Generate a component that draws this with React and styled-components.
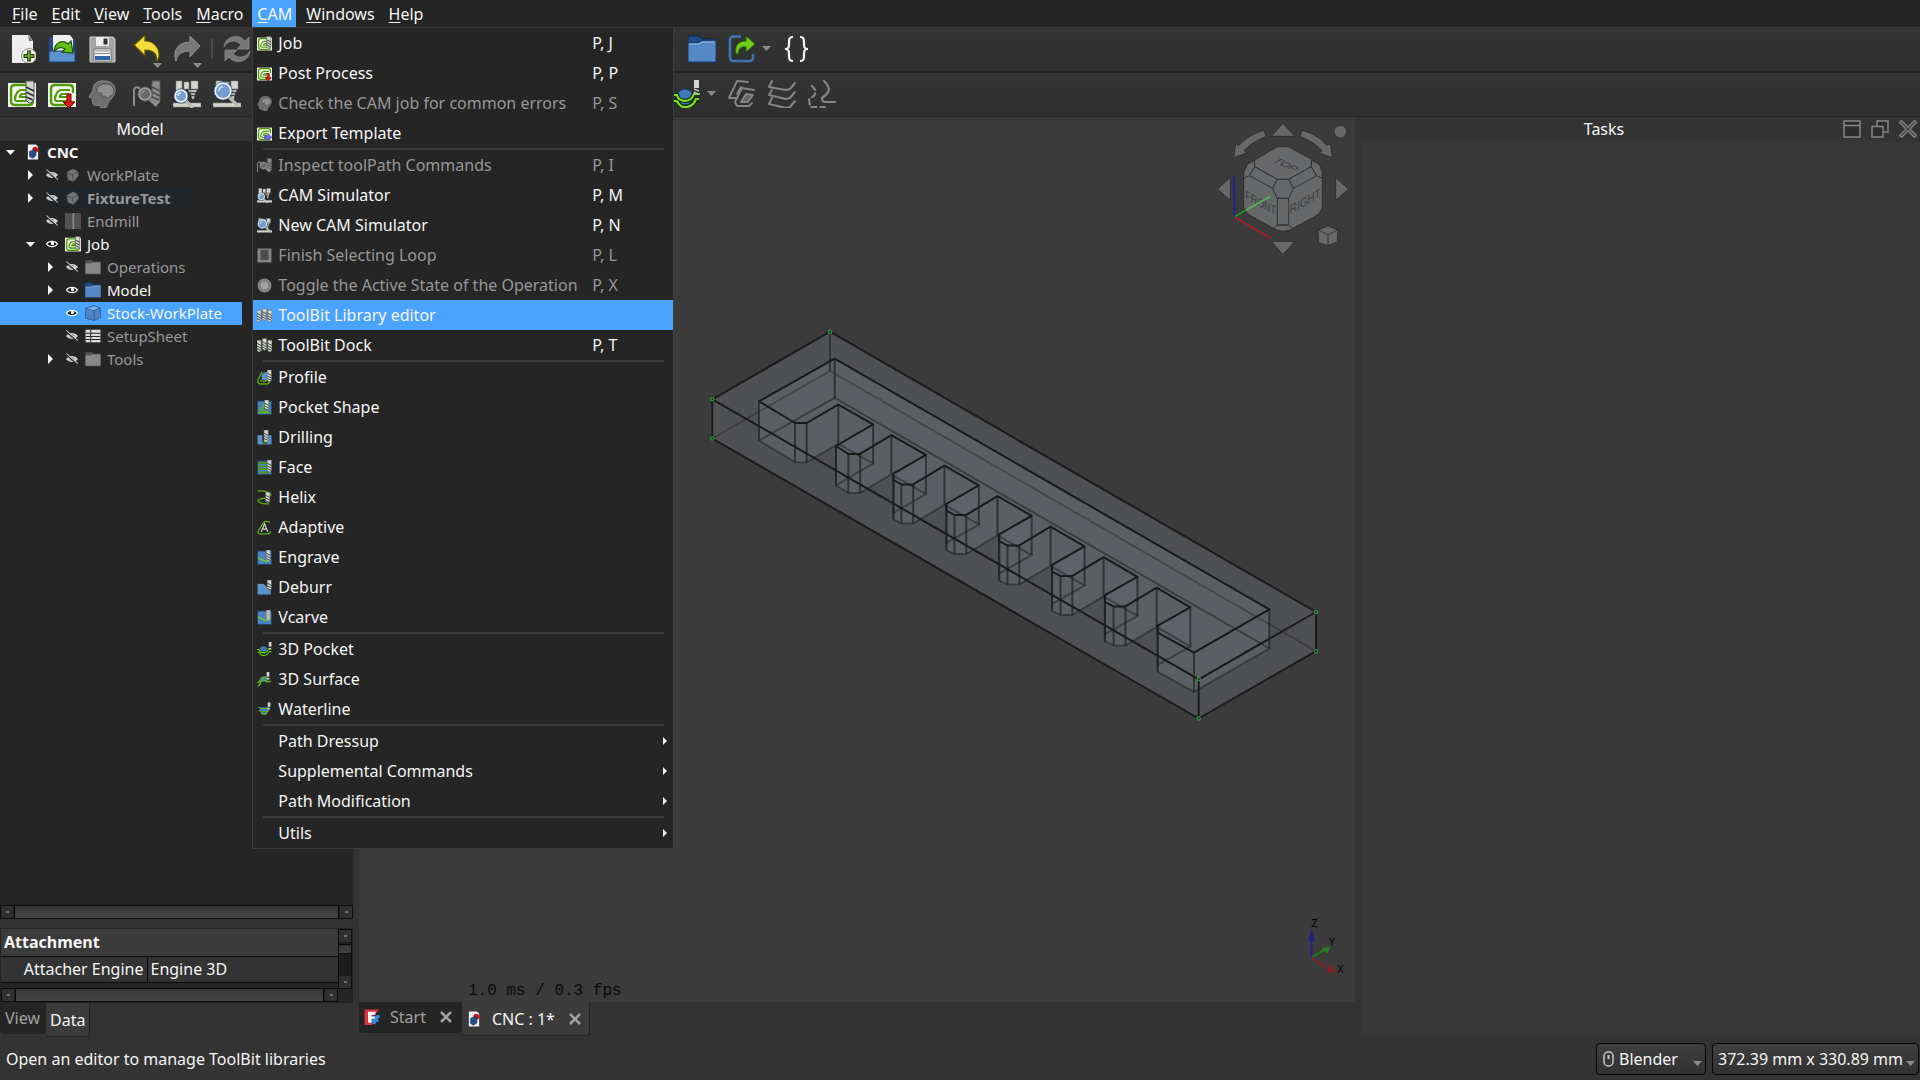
import { useState } from 'react';
import styled, { createGlobalStyle, css } from 'styled-components';

/* ---------- icons ---------- */

const Icon = ({ size = 28, children }) => (
	<svg width={size} height={size} viewBox="0 0 28 28" fill="none" aria-hidden="true">
		{children}
	</svg>
);

const Bit = ({ x = 18, y = 1, h = 20, dim }) => (
	<g>
		<path
			d={`M${x} ${y}h8v${h - 3}l-3 3h-2l-3-3z`}
			fill={dim ? '#8c8c8c' : '#d3d7cf'}
			stroke={dim ? '#5c5c5c' : '#555753'}
		/>
		<path
			d={`M${x} ${y + 6}l8 4M${x} ${y + 11}l8 4M${x} ${y + 16}l7 3`}
			stroke={dim ? '#4a4a4a' : '#2e3436'}
			strokeWidth="1.6"
		/>
	</g>
);

const Spiral = () => (
	<g>
		<path d="M0 3h28v24H0z" fill="#f4f8ee" />
		<path
			d="M25 13V9c0-3-1-4-4-4H7C4 5 3 6 3 9v12c0 3 1 4 4 4h14c3 0 4-1 4-4"
			stroke="#4e9a06"
			strokeWidth="2.4"
		/>
		<path d="M22 10h-9c-3 0-6 5-6 9 0 2 1 2 3 2h11M21 14h-6c-2 0-3 1-3 3h8" stroke="#4e9a06" strokeWidth="2.2" />
	</g>
);

const Lens = ({ x, y, r, dim }) => (
	<g>
		<path
			d={`M${x + r * 0.7} ${y + r * 0.7}L${x + r * 1.8} ${y + r * 1.8}`}
			stroke={dim ? '#8a8a8a' : '#babdb6'}
			strokeWidth="3.4"
			strokeLinecap="round"
		/>
		<circle cx={x} cy={y} r={r} fill={dim ? '#6a6a6a' : '#729fcf'} stroke={dim ? '#9a9a9a' : '#eeeeec'} strokeWidth="2" />
		<circle cx={x} cy={y} r={r + 1.2} stroke={dim ? '#555' : '#204a87'} strokeWidth="0.7" />
		<path d={`M${x - r / 2} ${y}q0-${r / 2} ${r / 2}-${r / 2}`} stroke={dim ? '#888' : '#d5e4f5'} strokeWidth="1.6" />
	</g>
);

const Machine = () => (
	<g>
		<path d="M3 1h6v12H3zM11 2h5v7h-5zM18 1h7v8h-7z" fill="#d3d7cf" stroke="#888a85" strokeWidth="0.6" />
		<path d="M15 10h9l-2 4h-4zM18 14h4l-1 5h-2z" fill="#babdb6" />
		<path d="M17 12l6 1M18 15l4 1" stroke="#2e3436" />
		<path d="M0 23h28v4H0z" fill="#d3d7cf" stroke="#888a85" strokeWidth="0.6" />
	</g>
);

const Brain = () => (
	<g>
		<path
			d="M17 1C9 0 5 4 5 10l-4 7 3 1 1 6c1 2 4 2 6 1l2 3 6-1c0-4 2-6 5-9 6-7 3-17-7-17z"
			fill="#6e6e6e"
			stroke="#8a8a8a"
		/>
		<path d="M9 9c0-5 15-9 17 1 0 4-2 6-4 6-1 3-4 2-5 0-3 1-4-1-3-3-3 1-6-1-5-4z" fill="#8f8f8f" stroke="#4c4c4c" />
	</g>
);

const BlueBlock = () => <path d="M1 2h26v25H1z" fill="#4a82c0" stroke="#1d3f70" strokeWidth="1.4" />;

const icons = {
	newDoc: (
		<>
			<path d="M4 0h17l4 6v22H4z" fill="#eeeeec" />
			<path d="M20 0l5 6h-4z" fill="#777" />
			<circle cx="21" cy="21" r="7.4" fill="#f5f5f3" stroke="#888" />
			<path d="M21 15.5v11M15.5 21h11" stroke="#22420a" strokeWidth="4" />
			<path d="M21 16.5v9M16.5 21h9" stroke="#5da30e" strokeWidth="2.2" />
		</>
	),
	open: (
		<>
			<path d="M1 2h7v24H1z" fill="#204a87" />
			<path d="M20 4h7v22h-7z" fill="#204a87" />
			<path d="M5 0h17l3 4v13H5z" fill="#eeeeec" />
			<path d="M1 16h26v11H1z" fill="#5b93d1" stroke="#1c3f73" />
			<path d="M6 17c0-9 8-13 14-8l3-3 2 12-11-1 3-3c-4-3-9-1-11 3z" fill="#5fbf14" stroke="#1f4d05" strokeWidth="1.2" />
		</>
	),
	save: (
		<>
			<path d="M2 2h23l2 2v23H2z" fill="#a4a6a2" stroke="#d0d2ce" />
			<path d="M8 2h13v9H8z" fill="#eeeeec" />
			<path d="M15.5 3.5h4v6h-4z" fill="#2e3436" />
			<path d="M6 14h17v12H6z" fill="#f5f5f3" stroke="#666" strokeWidth="0.8" />
			<path d="M7 16h15M7 18.5h15" stroke="#888" />
			<path d="M7 21h15v4H7z" fill="#3465a4" />
		</>
	),
	undo: (
		<path
			d="M1 10L12 0v6c9 0 15 7 14 16-1 3-2 4-3 4 2-6-2-11-11-11v6z"
			fill="#f4dc3a"
			stroke="#5f5200"
			strokeWidth="1.2"
		/>
	),
	redo: <path d="M27 11L17 1v6C7 7 1 13 2 22l1 4c1-6 5-10 14-10v6z" fill="#787878" stroke="#8e8e8e" />,
	refresh: (
		<>
			<path d="M1 12C2 1 16-2 22 6l4-4v12H14l4-4C13 4 5 5 1 12z" fill="#777" stroke="#8c8c8c" strokeWidth="0.8" />
			<path d="M27 16C26 27 12 30 6 22l-4 4V15h12l-4 4c5 5 13 4 17-3z" fill="#777" stroke="#8c8c8c" strokeWidth="0.8" />
		</>
	),
	folder: (
		<>
			<path d="M0 1h11l3 3h14v6H0z" fill="#204a87" stroke="#0d274d" />
			<path d="M0 8h10l3-2h15v21H0z" fill="#5588c7" stroke="#1b3c6c" />
			<path d="M1 9h10l3-2h13" stroke="#9dc0e8" />
		</>
	),
	folderGray: (
		<>
			<path d="M1 2h11l3 3h12v5H1z" fill="#565656" />
			<path d="M1 8h10l3-2h13v20H1z" fill="#888" stroke="#777" />
		</>
	),
	link: (
		<>
			<path d="M13 1.5H6c-3 0-4 1-4 4V22c0 3 1 4 4 4h15c3 0 4-1 4-4v-3" stroke="#3f74b5" strokeWidth="2.6" />
			<path d="M8 19C6 9 12 6 18 6V1l9 8-9 8v-5c-6-1-7 2-8 7z" fill="#6fcc1c" stroke="#2c6408" />
		</>
	),
	braces: (
		<path
			d="M10 2C6 2 6 4 6 8s0 6-4 6c4 0 4 2 4 6s0 6 4 6M17 2c4 0 4 2 4 6s0 6 4 6c-4 0-4 2-4 6s0 6-4 6"
			stroke="#f4f4f4"
			strokeWidth="2.2"
		/>
	),
	job: (
		<>
			<Spiral />
			<Bit x={18} y={1} h={22} />
		</>
	),
	post: (
		<>
			<Spiral />
			<path d="M19 14h4v8h4l-6 6-6-6h4z" fill="#e01b1b" stroke="#7c0000" />
		</>
	),
	exportTemplate: (
		<>
			<Spiral />
			<path d="M14 18h7v-3l7 6-7 6v-3h-7z" fill="#6a6af5" stroke="#3535b0" />
		</>
	),
	check: <Brain />,
	inspect: (
		<>
			<path d="M1 26V11c0-5 6-5 6 0" stroke="#8a8a8a" strokeWidth="2" />
			<Bit x={19} y={1} h={24} dim />
			<Lens x={12} y={14} r={6} dim />
		</>
	),
	simulator: (
		<>
			<Machine />
			<Lens x={8} y={16} r={6} />
		</>
	),
	newSimulator: (
		<>
			<Machine />
			<Lens x={10} y={11} r={8} />
		</>
	),
	loop: (
		<>
			<path d="M1 1h26v26H1z" fill="#858585" />
			<path d="M6 3h16v20H6z" fill="#4d4d4d" stroke="#a0a0a0" strokeDasharray="3 1.5" />
		</>
	),
	toggle: (
		<>
			<circle cx="14" cy="14" r="13" fill="#858585" />
			<circle cx="14" cy="14" r="8" fill="#a2a2a2" stroke="#666" strokeDasharray="3 2" strokeWidth="1.6" />
		</>
	),
	toolBits: (
		<>
			<Bit x={0} y={4} h={22} />
			<Bit x={10} y={1} h={22} />
			<Bit x={20} y={4} h={22} />
		</>
	),
	profile: (
		<>
			<path d="M9 18V10c1-6 10-7 13-4v13z" fill="#5b93d1" />
			<path d="M10 3L2 18c-2 7 3 9 8 8h9c4-1 5-5 3-8M6 19c5 4 10 2 14-1" stroke="#5fae14" strokeWidth="2.6" />
			<Bit x={19} y={0} h={22} />
		</>
	),
	pocket: (
		<>
			<BlueBlock />
			<path d="M2 25L15 5h8M7 24L17 8M12 24h13M3 25l20-5" stroke="#5fae14" strokeWidth="2.4" />
			<Bit x={14} y={0} h={20} />
		</>
	),
	drilling: (
		<>
			<path d="M1 10h9v13h9V10h8v17H1z" fill="#5b93d1" />
			<path d="M11 20h8v6h-8z" fill="#356a10" />
			<Bit x={13} y={0} h={23} />
		</>
	),
	face: (
		<>
			<BlueBlock />
			<path d="M2 6h18M25 12H4v5h20M24 23H3" stroke="#4e9a06" strokeWidth="3.2" />
			<Bit x={19} y={0} h={22} />
		</>
	),
	helix: (
		<>
			<path d="M1 2c12-1 24 2 25 7 0 7-20 5-24 10-1 5 10 7 20 7" stroke="#5fae14" strokeWidth="2.4" />
			<Bit x={16} y={4} h={20} />
		</>
	),
	adaptive: (
		<>
			<path d="M24 5c-2-3-9-3-12 0L2 21c-1 3 1 5 4 5h14c3 0 5-2 5-5" stroke="#5fae14" strokeWidth="2.4" />
			<path d="M8 22l6-15 6 15M11 17h7" stroke="#d3d7cf" strokeWidth="2.2" />
		</>
	),
	engrave: (
		<>
			<BlueBlock />
			<path d="M2 15l11 5 11 1" stroke="#76d11e" strokeWidth="2.6" />
			<Bit x={17} y={0} h={21} />
		</>
	),
	deburr: (
		<>
			<path d="M1 8h11l14 12v7H1z" fill="#5b93d1" />
			<path d="M1 8h11l6 6" stroke="#9dc0e8" />
			<Bit x={19} y={0} h={20} />
		</>
	),
	vcarve: (
		<>
			<BlueBlock />
			<path d="M2 13l12 6 7 1" stroke="#76d11e" strokeWidth="2.6" />
			<path d="M17 0h8v17l-4 4-4-4z" fill="#b7b9b4" stroke="#6b6d69" />
		</>
	),
	pocket3d: (
		<>
			<circle cx="12" cy="15" r="7" fill="#3f78bd" />
			<path d="M0 14h4c2 8 14 8 17-1h6M1 19h3c4 9 15 8 19-1h4" stroke="#132b06" strokeWidth="4" />
			<path d="M0 14h4c2 8 14 8 17-1h6M1 19h3c4 9 15 8 19-1h4" stroke="#74c81c" strokeWidth="2" />
			<path d="M22 0h5v9h-5zM22 11h4v3h-4z" fill="#d3d7cf" />
		</>
	),
	surface3d: (
		<>
			<path d="M6 19c2-14 12-16 15-2z" fill="#3f78bd" />
			<path d="M1 26c8-1 3-9 9-11s5 7 16 2M0 20c7 0 5-8 10-10s8 3 15 3" stroke="#65b615" strokeWidth="2.4" />
			<path d="M18 0h5v9h-5zM18 11h4v3h-4z" fill="#d3d7cf" />
		</>
	),
	waterline: (
		<>
			<path d="M5 10h17c0 9-3 14-9 14S5 18 5 10z" fill="#3f78bd" />
			<path d="M2 10c6 3 15 3 21 0M3 16c6 3 14 3 20 0M7 21c4 2 9 2 12 0" stroke="#65b615" strokeWidth="2" />
			<path d="M20 1h5v8h-5zM20 11h4v3h-4z" fill="#d3d7cf" />
		</>
	),
	surfaceTool: (
		<>
			<circle cx="12" cy="17" r="8" fill="#3f78bd" stroke="#173765" />
			<path d="M0 15h4c2 8 14 8 17-1h6M1 21h3c4 9 15 8 19-2h3" stroke="#132b06" strokeWidth="4.4" />
			<path d="M0 15h4c2 8 14 8 17-1h6M1 21h3c4 9 15 8 19-2h3" stroke="#80dc22" strokeWidth="2.2" />
			<path d="M21 0h5v8h-5z" fill="#d3d7cf" />
			<path d="M21 9l5 2M21 12l4 2" stroke="#babdb6" strokeWidth="1.6" />
		</>
	),
	sheets: (
		<g stroke="#858585" strokeWidth="1.8" strokeLinejoin="round" strokeLinecap="round">
			<path d="M20 2L9 1 1 18h7M26 10l-12-2-7 14 2 4h12l3-3" />
			<path d="M13 7L9 14M25 15l-5 7h-7l5-8z" fill="#666" />
		</g>
	),
	layers: (
		<g stroke="#858585" strokeWidth="2" strokeLinejoin="round" strokeLinecap="round">
			<path d="M4 1L1 7l17 3 4-1 5-6M4 10l-3 5 17 4 4-1 5-6M4 18l-3 6 17 4 4-1 5-6" />
		</g>
	),
	boundary: (
		<g stroke="#858585" strokeWidth="2.2" strokeLinecap="round">
			<path d="M16 1c8 8 5 12-2 17 0 3 1 4 3 4h10" />
			<path d="M4 6l4 5-2 5-5 3 1 8h15" strokeDasharray="5 4" />
		</g>
	),
	body: (
		<>
			<path d="M3 9L14 3l8 4 2 8-9 11-10-4z" fill="#747474" stroke="#444" />
			<path d="M3 10l10 4 9-6M13 14l2 12" stroke="#4a4a4a" strokeWidth="1.6" />
		</>
	),
	endmill: (
		<>
			<path d="M0 0h28v28H0z" fill="#525252" />
			<path d="M13 0h3v28h-3z" fill="#8a8a8a" />
		</>
	),
	stock: (
		<>
			<path d="M1 6L15 1l12 4v17l-11 5L1 23z" fill="#4f86c6" stroke="#2a5796" strokeWidth="1.4" />
			<path d="M1 6l15 4 11-5M16 10v17" stroke="#2a5796" strokeWidth="1.4" />
			<path d="M3 6L15 2l9 3-8 4z" fill="#7fb0e6" />
		</>
	),
	sheet: (
		<>
			<path d="M1 3h26v22H1z" fill="#ddd" />
			<path d="M1 9h26M1 15h26M1 20h26M10 3v22" stroke="#252525" strokeWidth="1.8" />
		</>
	),
	document: (
		<>
			<path d="M5 1h14l4 4v22H5z" fill="#f2f2f2" />
			<circle cx="18" cy="10" r="5" fill="#cc1212" />
			<path d="M8 13l6-3 5 2v9l-6 4-5-3z" fill="#27508f" stroke="#102a55" />
		</>
	),
	freecad: (
		<>
			<path d="M1 1h26L15 13v15H1z" fill="#e03040" />
			<path d="M27 10l1 5-4 2 2 5-5 1-1 4-6-1V13z" fill="#3a86dc" />
			<path d="M7 5h13v5h-7v3h6v4h-6v7H7z" fill="#fff" />
		</>
	),
	visible: (
		<>
			<path d="M3 14C8 7 20 7 25 14 20 21 8 21 3 14z" stroke="#fff" strokeWidth="2.4" fill="#111" />
			<circle cx="15" cy="13" r="3.4" fill="#fff" />
		</>
	),
	hidden: (
		<>
			<path d="M2 14C8 6 20 6 26 14 20 22 8 22 2 14z" fill="#cfcfcf" />
			<circle cx="14" cy="14" r="4" fill="#888" />
			<path d="M2 5l23 20" stroke="#333" strokeWidth="3" />
			<path d="M3 3l23 20" stroke="#ddd" strokeWidth="2" />
		</>
	),
};

const Glyph = ({ name, size }) => <Icon size={size}>{icons[name]}</Icon>;

/* ---------- data ---------- */

const menus = ['File', 'Edit', 'View', 'Tools', 'Macro', 'CAM', 'Windows', 'Help'];

const camMenu = [
	[
		{ icon: 'job', label: 'Job', keys: 'P, J' },
		{ icon: 'post', label: 'Post Process', keys: 'P, P' },
		{ icon: 'check', label: 'Check the CAM job for common errors', keys: 'P, S', disabled: true },
		{ icon: 'exportTemplate', label: 'Export Template' },
	],
	[
		{ icon: 'inspect', label: 'Inspect toolPath Commands', keys: 'P, I', disabled: true },
		{ icon: 'simulator', label: 'CAM Simulator', keys: 'P, M' },
		{ icon: 'newSimulator', label: 'New CAM Simulator', keys: 'P, N' },
		{ icon: 'loop', label: 'Finish Selecting Loop', keys: 'P, L', disabled: true },
		{ icon: 'toggle', label: 'Toggle the Active State of the Operation', keys: 'P, X', disabled: true },
		{ icon: 'toolBits', label: 'ToolBit Library editor' },
		{ icon: 'toolBits', label: 'ToolBit Dock', keys: 'P, T' },
	],
	[
		{ icon: 'profile', label: 'Profile' },
		{ icon: 'pocket', label: 'Pocket Shape' },
		{ icon: 'drilling', label: 'Drilling' },
		{ icon: 'face', label: 'Face' },
		{ icon: 'helix', label: 'Helix' },
		{ icon: 'adaptive', label: 'Adaptive' },
		{ icon: 'engrave', label: 'Engrave' },
		{ icon: 'deburr', label: 'Deburr' },
		{ icon: 'vcarve', label: 'Vcarve' },
	],
	[
		{ icon: 'pocket3d', label: '3D Pocket' },
		{ icon: 'surface3d', label: '3D Surface' },
		{ icon: 'waterline', label: 'Waterline' },
	],
	[
		{ label: 'Path Dressup', sub: true },
		{ label: 'Supplemental Commands', sub: true },
		{ label: 'Path Modification', sub: true },
	],
	[{ label: 'Utils', sub: true }],
];

const tree = [
	{ label: 'CNC', icon: 'document', level: 0, arrow: 'open', bold: true },
	{ label: 'WorkPlate', icon: 'body', level: 1, arrow: 'closed', eye: 'hidden' },
	{ label: 'FixtureTest', icon: 'body', level: 1, arrow: 'closed', eye: 'hidden', bold: true, active: true },
	{ label: 'Endmill', icon: 'endmill', level: 1, eye: 'hidden' },
	{ label: 'Job', icon: 'job', level: 1, arrow: 'open', eye: 'visible' },
	{ label: 'Operations', icon: 'folderGray', level: 2, arrow: 'closed', eye: 'hidden' },
	{ label: 'Model', icon: 'folder', level: 2, arrow: 'closed', eye: 'visible' },
	{ label: 'Stock-WorkPlate', icon: 'stock', level: 2, eye: 'visible', selected: true },
	{ label: 'SetupSheet', icon: 'sheet', level: 2, eye: 'hidden' },
	{ label: 'Tools', icon: 'folderGray', level: 2, arrow: 'closed', eye: 'hidden' },
];

/* ---------- 3D scene ---------- */

const DEPTH = 39.2;

const slots = Array.from({ length: 7 }, (_, n) => {
	const x = 838.3 + 53.06 * n;
	const y = 404.7 + 30.5 * n;
	return {
		peak: [x, y],
		corner: [x + 34.8 - n * 0.2, y + 19.6],
		foot: n === 0 ? [x - 2.3, y + 41.3] : [x + 2.3 - n * 0.2, y + 38.5 - n * 0.1],
		heel: n === 0 ? [x - 2.3, y + 41.3] : [x + 2.3 - n * 0.2, y + 45],
		toe: [x + 10, y + 49.2],
		tip: [x + 21.8, y + 49.2],
	};
});

const pocketOutline = [
	[834.7, 358.7],
	[759, 401.3],
	[795, 423],
	[806.7, 423],
	...slots.flatMap((s, n) =>
		n < 6 ? [s.peak, s.corner, s.foot, s.heel, s.toe, s.tip] : [s.peak, s.corner, s.foot, s.heel]
	),
	[1194, 652.7],
	[1269.3, 609.3],
];

const stockTop = [[830, 331.7], [712.3, 399.3], [1198.7, 679.3], [1316, 612]];

const drop = ([x, y]) => [x, y + DEPTH];
const points = (list) => list.map((p) => p.join(',')).join(' ');

const Scene = () => (
	<SceneSvg viewBox="359 117 996 885" fill="none" role="img" aria-label="Stock and fixture">
		<polygon
			points={points([stockTop[0], stockTop[1], drop(stockTop[1]), drop(stockTop[2]), drop(stockTop[3]), stockTop[3]])}
			fill="#4f5053"
		/>
		<g fill="#5b5e62">
			<polygon points={points(pocketOutline)} />
			{pocketOutline.map((p, i) => {
				const next = pocketOutline[(i + 1) % pocketOutline.length];
				return <polygon key={i} points={points([p, next, drop(next), drop(p)])} />;
			})}
		</g>
		<g fill="#60626a">
			{slots.map((s, n) => (
				<polygon
					key={n}
					points={points(
						n < 6
							? [s.corner, s.foot, s.heel, s.toe, s.tip, [s.corner[0], s.tip[1] - 8]]
							: [s.corner, s.foot, drop(s.corner)]
					)}
				/>
			))}
		</g>
		<g stroke="#1c1e20" strokeWidth="2">
			<polyline strokeOpacity="0.35" points={points([drop(stockTop[1]), drop(stockTop[0]), drop(stockTop[3])])} />
			<polygon strokeOpacity="0.5" points={points(pocketOutline.map(drop))} />
		</g>
		<g stroke="#1c1e20" strokeOpacity="0.65" strokeWidth="2">
			<line x1="830" y1="331.7" x2="830" y2="371" />
			{pocketOutline.map((p, i) => (
				<line key={i} x1={p[0]} y1={p[1]} x2={p[0]} y2={p[1] + DEPTH} />
			))}
		</g>
		<g stroke="#191a1a" strokeWidth="2" strokeLinejoin="round">
			<polygon points={points(pocketOutline)} />
			<polygon points={points(stockTop)} />
			<polyline
				points={points([stockTop[1], drop(stockTop[1]), drop(stockTop[2]), drop(stockTop[3]), stockTop[3]])}
			/>
			<line x1="1198.7" y1="679.3" x2="1198.7" y2="718.3" />
		</g>
		<g stroke="#2a9a3e" strokeWidth="1.2">
			{[...stockTop, drop(stockTop[1]), drop(stockTop[2]), drop(stockTop[3])].map(([x, y]) => (
				<circle key={`${x}-${y}`} cx={x} cy={y} r="1.6" />
			))}
		</g>
	</SceneSvg>
);

const NavCube = () => (
	<NavCubeSvg width="140" height="143" viewBox="45 51 420 429" role="img" aria-label="Navigation cube">
		<g fill="#66686a" stroke="#292a2b" strokeWidth="2.5" strokeLinejoin="round">
			<path d="M249 70l35 39h-70zM214 424h70l-35 40zM52 267l39-34v68zM446 267l-39-34v68z" />
			<path d="M192 91C160 100 135 115 116 137l-9-7-6 43 39-14-8-7c16-16 36-32 66-42z" />
			<path d="M306 91c32 9 57 24 76 46l9-7 6 43-39-14 8-7c-16-16-36-32-66-42z" />
			<circle cx="421" cy="95" r="19" />
			<path d="M232 140h33l75 41 18 12 9 25v104l-9 18-18 12-72 39-18 3-18-3-72-39-18-12-11-18V218l11-25 21-12z" />
			<path d="M163 181l1 19 68 38h34l68-38v-19M163 181l-15 46 84 37" fill="none" />
			<path d="M164 200l-16 27 70 38 14-27zM334 200l16 27-70 38-14-27z" />
			<path d="M163 181l1 19-16 27-17 8v-17l11-25zM335 181l-1 19 16 27 17 8v-17l-9-25z" />
			<path d="M232 238h34l14 27-14 30h-34l-14-30zM232 295h34v80h-34zM232 375h34l13 10-11 6-18 3-18-3-12-6z" />
			<path d="M384 378l30 12-2 35-28 12-28-9-2-38z" />
			<path d="M354 390l30 14 30-14M384 404v33" fill="none" />
		</g>
		<g fill="#3c3d3e" fontFamily="'Liberation Sans', Arial, sans-serif" fontSize="38">
			<text transform="matrix(0.82 0.42 -0.72 0.4 217 183)">TOP</text>
			<text transform="matrix(0.7 0.38 0 1 136 297)">FRONT</text>
			<text transform="matrix(0.78 -0.45 0 1 270 343)">RIGHT</text>
		</g>
		<g fill="none" strokeWidth="5">
			<path d="M104 351l-2-125" stroke="#1a1aa8" />
			<path d="M104 352l108 63" stroke="#a81c1c" />
			<path d="M104 350l36-21" stroke="#1f9a1f" />
			<path d="M140 329l71-40" stroke="#4fb853" />
		</g>
	</NavCubeSvg>
);

const AxisCross = () => (
	<AxisSvg width="60" height="70" viewBox="0 0 60 70" role="img" aria-label="Axis cross">
		<path d="M16.5 43V22" stroke="#20208a" strokeWidth="2" />
		<path d="M16.5 14l3.5 12h-7z" fill="#20208a" />
		<path d="M17 42l12-7" stroke="#1f801f" strokeWidth="2" />
		<path d="M35 32l-3 6-5-4z" fill="#1f801f" stroke="#1f801f" />
		<path d="M17 43l14 9" stroke="#8a2020" strokeWidth="2" />
		<path d="M41 57l-9-1 3-6z" fill="#8a2020" stroke="#8a2020" />
		<g fill="#050505" fontFamily="'DejaVu Sans', sans-serif" fontSize="10">
			<text x="16" y="12">Z</text>
			<text x="34" y="31">Y</text>
			<text x="42" y="58">X</text>
		</g>
	</AxisSvg>
);

/* ---------- parts ---------- */

const DropArrow = () => (
	<svg width="9" height="5" viewBox="0 0 9 5" aria-hidden="true">
		<path d="M0 0h9L4.5 5z" fill="#8c8c8c" />
	</svg>
);

const Tool = ({ name, label, menu, corner }) => (
	<ToolButton type="button" aria-label={label}>
		<Glyph name={name} />
		{menu && <DropArrow />}
		{corner && (
			<Corner>
				<DropArrow />
			</Corner>
		)}
	</ToolButton>
);

const DockHeader = ({ title }) => (
	<DockTitle>
		<h2>{title}</h2>
		<DockButton type="button" aria-label="Toggle overlay">
			<svg width="18" height="18" viewBox="0 0 18 18" fill="#2c2c2c" stroke="#858585" strokeWidth="1.5">
				<path d="M1 1h16v16H1zM1 5.5h16" />
			</svg>
		</DockButton>
		<DockButton type="button" aria-label="Float">
			<svg width="18" height="18" viewBox="0 0 18 18" fill="#2c2c2c" stroke="#858585" strokeWidth="1.5">
				<path d="M6 1h11v11H6z" />
				<path d="M1 6.5h11V17H1z" />
			</svg>
		</DockButton>
		<DockButton type="button" aria-label="Close">
			<svg width="18" height="18" viewBox="0 0 18 18" fill="none" strokeLinecap="square">
				<path d="M2.5 2.5l13 13M15.5 2.5l-13 13" stroke="#858585" strokeWidth="4" />
				<path d="M2.5 2.5l13 13M15.5 2.5l-13 13" stroke="#444" strokeWidth="1.5" />
			</svg>
		</DockButton>
	</DockTitle>
);

const ScrollBar = ({ vertical }) => (
	<Track $vertical={vertical}>
		<StepButton type="button" aria-label={vertical ? 'Scroll up' : 'Scroll left'} />
		<Thumb $vertical={vertical} />
		<StepButton type="button" aria-label={vertical ? 'Scroll down' : 'Scroll right'} />
	</Track>
);

const TreeItem = ({ item }) => (
	<TreeRow
		role="treeitem"
		aria-selected={!!item.selected}
		$selected={item.selected}
		$level={item.level}
	>
		<Expander>
			{item.arrow && (
				<svg width="10" height="10" viewBox="0 0 10 10" aria-hidden="true">
					<path d={item.arrow === 'open' ? 'M1 3h9L5.5 8z' : 'M3 0l5 5-5 5z'} fill="#f4f4f4" />
				</svg>
			)}
		</Expander>
		<TreeCell $active={item.active} $muted={item.eye === 'hidden'} $bold={item.bold}>
			{item.eye && <Glyph name={item.eye} size={14} />}
			<Glyph name={item.icon} size={16} />
			<span>{item.label}</span>
		</TreeCell>
	</TreeRow>
);

const CamMenu = ({ current, onHover }) => (
	<Popup role="menu" aria-label="CAM">
		{camMenu.map((group, i) => (
			<MenuGroup key={i}>
				{group.map((item) => (
					<MenuItem
						key={item.label}
						type="button"
						role="menuitem"
						disabled={item.disabled}
						$current={item.label === current}
						onMouseEnter={() => onHover(item.label)}
					>
						<MenuIcon>{item.icon && <Glyph name={item.icon} size={15} />}</MenuIcon>
						<MenuLabel>{item.label}</MenuLabel>
						{item.keys && <Shortcut>{item.keys}</Shortcut>}
						{item.sub && (
							<svg width="5" height="8" viewBox="0 0 5 8" aria-hidden="true">
								<path d="M0 0l4 4-4 4z" fill="#f0f0f0" />
							</svg>
						)}
					</MenuItem>
				))}
			</MenuGroup>
		))}
	</Popup>
);

const CloseCross = () => (
	<svg width="12" height="12" viewBox="0 0 12 12" aria-hidden="true">
		<path d="M1 1l10 10M11 1L1 11" stroke="#a0a0a0" strokeWidth="2.5" />
	</svg>
);

const App = () => {
	const [current, setCurrent] = useState('ToolBit Library editor');

	return (
		<>
			<GlobalStyle />
			<Window>
				<MenuBar role="menubar">
					{menus.map((name) => (
						<MenuEntry key={name}>
							<MenuTitle type="button" role="menuitem" $open={name === 'CAM'}>
								<u>{name[0]}</u>
								{name.slice(1)}
							</MenuTitle>
							{name === 'CAM' && <CamMenu current={current} onHover={setCurrent} />}
						</MenuEntry>
					))}
				</MenuBar>

				<ToolBar $ruled>
					<ToolGroup>
						<Tool name="newDoc" label="New" />
						<Tool name="open" label="Open" />
						<Tool name="save" label="Save" />
					</ToolGroup>
					<ToolGroup $offset={17}>
						<Tool name="undo" label="Undo" corner />
						<Tool name="redo" label="Redo" corner />
					</ToolGroup>
					<Divider />
					<Tool name="refresh" label="Refresh" />
					<ToolGroup $offset={437}>
						<Tool name="folder" label="Group" />
						<Tool name="link" label="Link" menu />
						<Tool name="braces" label="Expression" />
					</ToolGroup>
				</ToolBar>
				<ToolBar>
					<ToolGroup>
						<Tool name="job" label="Job" />
						<Tool name="post" label="Post Process" />
						<Tool name="check" label="Check job" />
					</ToolGroup>
					<ToolGroup $offset={17}>
						<Tool name="inspect" label="Inspect" />
						<Tool name="simulator" label="CAM Simulator" />
						<Tool name="newSimulator" label="New CAM Simulator" />
					</ToolGroup>
					<ToolGroup $offset={432}>
						<Tool name="surfaceTool" label="3D operations" menu />
						<Tool name="sheets" label="Copy operation" />
						<Tool name="layers" label="Array" />
						<Tool name="boundary" label="Simple copy" />
					</ToolGroup>
				</ToolBar>

				<Workspace>
					<LeftDock>
						<DockHeader title="Model" />
						<TreePane>
							<TreeList role="tree" aria-label="Model">
								{tree.map((item) => (
									<TreeItem key={item.label} item={item} />
								))}
							</TreeList>
						</TreePane>
						<ScrollBar />
						<Properties>
							<PropertyMain>
								<PropertyTable>
									<thead>
										<tr>
											<th colSpan="2">Attachment</th>
										</tr>
									</thead>
									<tbody>
										<tr>
											<td>Attacher Engine</td>
											<td>Engine 3D</td>
										</tr>
									</tbody>
								</PropertyTable>
								<ScrollBar />
							</PropertyMain>
							<ScrollBar vertical />
						</Properties>
						<TabStrip role="tablist" $height={34}>
							<Tab type="button" role="tab">View</Tab>
							<Tab type="button" role="tab" $active>Data</Tab>
						</TabStrip>
					</LeftDock>

					<Center>
						<Viewport>
							<Scene />
							<NavCube />
							<AxisCross />
							<Fps>1.0 ms / 0.3 fps</Fps>
						</Viewport>
						<TabStrip $height={35}>
							<DocTab>
								<Glyph name="freecad" size={16} />
								<a href="#start">Start</a>
								<button type="button" aria-label="Close Start"><CloseCross /></button>
							</DocTab>
							<DocTab $active>
								<Glyph name="document" size={16} />
								<a href="#cnc">CNC : 1*</a>
								<button type="button" aria-label="Close CNC"><CloseCross /></button>
							</DocTab>
						</TabStrip>
					</Center>

					<RightDock>
						<DockHeader title="Tasks" />
						<TaskPane />
					</RightDock>
				</Workspace>

				<StatusBar>
					<StatusText>Open an editor to manage ToolBit libraries</StatusText>
					<Combo $width={110}>
						<svg width="13" height="16" viewBox="0 0 13 16" fill="none" stroke="#c8c8c8" strokeWidth="1.5" aria-hidden="true">
							<rect x="2" y="1" width="9" height="14" rx="4" />
							<path d="M6.5 4v4" strokeWidth="2" />
						</svg>
						<select aria-label="Navigation style">
							<option>Blender</option>
						</select>
						<DropArrow />
					</Combo>
					<Combo $width={207}>
						<select aria-label="View dimensions">
							<option>372.39 mm x 330.89 mm</option>
						</select>
						<DropArrow />
					</Combo>
				</StatusBar>
			</Window>
		</>
	);
};

export default App;

/* ---------- styles ---------- */

const GlobalStyle = createGlobalStyle`
	* {
		box-sizing: border-box;
	}

	body {
		margin: 0;
		background: #333333;
		color: #f5f5f5;
		font: 16px/22px 'Noto Sans', sans-serif;
	}

	button,
	select {
		margin: 0;
		padding: 0;
		border: 0;
		background: none;
		color: inherit;
		font: inherit;
	}

	svg {
		display: block;
		flex: none;
	}
`;

const Window = styled.div`
	display: flex;
	flex-direction: column;
	min-height: 100vh;
`;

const MenuBar = styled.nav`
	display: flex;
	height: 28px;
	padding-left: 7px;
	border-bottom: 1px solid #3a3a3a;
	background: #242424;
`;

const MenuEntry = styled.div`
	position: relative;
	display: flex;
	margin-right: 5px;
`;

const MenuTitle = styled.button`
	padding: 0 4px 0 5px;
	line-height: 28px;
	background: ${({ $open }) => $open && '#4aa3ff'};

	u {
		text-decoration-thickness: 1px;
		text-underline-offset: 2px;
	}
`;

const Popup = styled.div`
	position: absolute;
	top: 27px;
	left: 0;
	z-index: 10;
	width: 422px;
	border: 1px solid #3c3c3c;
	background: #252525;
`;

const MenuGroup = styled.div`
	& + &::before {
		content: '';
		display: block;
		height: 2px;
		margin: 0 9px 0 10px;
		background: #3c3c3c;
	}
`;

const MenuItem = styled.button`
	display: flex;
	align-items: center;
	width: 100%;
	height: 30px;
	padding: 0 5px 0 4px;
	text-align: left;
	background: ${({ $current }) => $current && '#4aa3ff'};

	&:disabled {
		color: #979797;
	}
`;

const MenuIcon = styled.span`
	width: 21px;
`;

const MenuLabel = styled.span`
	flex: 1;
`;

const Shortcut = styled.span`
	width: 76px;
`;

const ToolBar = styled.div`
	display: flex;
	align-items: center;
	height: ${({ $ruled }) => ($ruled ? 45 : 44)}px;
	padding: 0 0 2px 8px;
	border-bottom: ${({ $ruled }) => ($ruled ? 2 : 1)}px solid #232323;
	background: linear-gradient(#343434, #2f2f2f);
`;

const ToolGroup = styled.div`
	display: flex;
	gap: 12px;
	margin-left: ${({ $offset }) => $offset || 0}px;
`;

const ToolButton = styled.button`
	position: relative;
	display: flex;
	align-items: center;
	gap: 6px;
`;

const Corner = styled.span`
	position: absolute;
	right: -1px;
	bottom: -5px;
`;

const Divider = styled.div`
	width: 2px;
	height: 20px;
	margin: 0 10px;
	background: #4a4a4a;
`;

const Workspace = styled.main`
	display: flex;
	flex: 1;
`;

const LeftDock = styled.aside`
	display: flex;
	flex-direction: column;
	flex: 0 0 353px;
	margin-right: 6px;
`;

const RightDock = styled.aside`
	display: flex;
	flex-direction: column;
	flex: 0 0 559px;
	margin-left: 6px;
`;

const Center = styled.section`
	display: flex;
	flex-direction: column;
	flex: 1;
	min-width: 0;
`;

const DockTitle = styled.header`
	display: flex;
	align-items: center;
	gap: 10px;
	height: 24px;
	padding: 0 3px 0 14px;

	h2 {
		flex: 1;
		margin: 0;
		font-size: 16px;
		font-weight: 400;
		text-align: center;
	}
`;

const DockButton = styled.button`
	width: 18px;
	height: 18px;
`;

const TreePane = styled.div`
	flex: 1;
	background: #252525;
`;

const TreeList = styled.div`
	width: 242px;
	font-size: 15px;
`;

const TreeRow = styled.div`
	display: flex;
	align-items: center;
	height: 23px;
	padding: 0 0 2px ${({ $level }) => $level * 20}px;
	background: ${({ $selected }) => $selected && '#4aa3ff'};
`;

const Expander = styled.span`
	display: flex;
	justify-content: center;
	width: 20px;
	margin-right: 5px;
`;

const TreeCell = styled.span`
	display: flex;
	align-items: center;
	gap: 6px;
	height: 21px;
	${({ $muted }) => $muted && css`color: #999999;`}
	font-weight: ${({ $bold }) => ($bold ? 700 : 400)};
	background: ${({ $active }) => $active && '#20252a'};
	padding-right: ${({ $active }) => ($active ? 20 : 0)}px;
`;

const Track = styled.div`
	display: flex;
	flex-direction: ${({ $vertical }) => ($vertical ? 'column' : 'row')};
	justify-content: space-between;
	flex: 0 0 14px;
	gap: 2px;
	border: 1px solid #0c0c0c;
	background: #1d1d1d;
`;

const Thumb = styled.div`
	flex: ${({ $vertical }) => ($vertical ? '0 0 8px' : 1)};
	margin-bottom: ${({ $vertical }) => ($vertical ? 20 : 0)}px;
	outline: 1px solid #0a0a0a;
	background: linear-gradient(#363636, #454545);
`;

const StepButton = styled.button`
	display: grid;
	place-items: center;
	width: 12px;
	height: 12px;
	background: #303030;

	&::before {
		content: '';
		width: 3px;
		height: 2px;
		background: #707070;
	}
`;

const Properties = styled.div`
	display: flex;
	height: 75px;
	margin-top: 9px;
	border: 1px solid #222222;
	background: #252525;

	& > ${Track} {
		height: 60px;
	}
`;

const PropertyMain = styled.div`
	display: flex;
	flex-direction: column;
	justify-content: space-between;
	flex: 1;
`;

const PropertyTable = styled.table`
	width: 100%;
	border-collapse: collapse;

	th {
		height: 27px;
		padding: 0 3px;
		border-bottom: 1px solid #0a0a0a;
		background: #3b3b3b;
		text-align: left;
	}

	td {
		height: 26px;
		padding: 0 3px;
		border-bottom: 1px solid #0a0a0a;
		background: #333333;
	}

	td:first-child {
		width: 146px;
		border-right: 1px solid #0a0a0a;
		text-align: right;
	}
`;

const TabStrip = styled.div`
	display: flex;
	align-items: flex-start;
	height: ${({ $height }) => $height}px;
`;

const tabLook = css`
	height: ${({ $active }) => ($active ? 34 : 31)}px;
	border: 1px solid #232323;
	border-top: 0;
	border-radius: 0 0 4px 4px;
	background: ${({ $active }) => ($active ? '#3b3b3b' : '#252525')};
	color: ${({ $active }) => ($active ? '#f5f5f5' : '#a0a0a0')};
`;

const Tab = styled.button`
	${tabLook}
	padding: 0 4px;
`;

const DocTab = styled.div`
	display: flex;
	align-items: center;
	gap: 10px;
	padding: 0 8px 0 4px;
	${tabLook}

	a {
		color: inherit;
		text-decoration: none;
	}

	button {
		padding-left: 4px;
	}
`;

const Viewport = styled.div`
	position: relative;
	flex: 1;
	background: #3b3b3b;
`;

const SceneSvg = styled.svg`
	width: 100%;
`;

const NavCubeSvg = styled.svg`
	position: absolute;
	top: 0;
	right: 0;
`;

const AxisSvg = styled.svg`
	position: absolute;
	right: 0;
	bottom: 17px;
`;

const Fps = styled.span`
	position: absolute;
	left: 109px;
	bottom: 0;
	color: #0a0a0a;
	font-family: 'Liberation Mono', monospace;
`;

const TaskPane = styled.div`
	flex: 1;
	background: #373737;
`;

const StatusBar = styled.footer`
	display: flex;
	align-items: center;
	gap: 6px;
	height: 43px;
	padding: 0 1px 0 6px;
`;

const StatusText = styled.span`
	flex: 1;
`;

const Combo = styled.label`
	display: flex;
	align-items: center;
	gap: 4px;
	width: ${({ $width }) => $width}px;
	height: 32px;
	padding: 0 3px 0 5px;
	border: 1px solid #060606;
	border-radius: 4px;
	background: linear-gradient(#3f3f3f, #313131);

	select {
		flex: 1;
		min-width: 0;
		appearance: none;
		text-overflow: clip;
	}

	& > :last-child {
		align-self: flex-end;
		margin-bottom: 8px;
	}
`;
